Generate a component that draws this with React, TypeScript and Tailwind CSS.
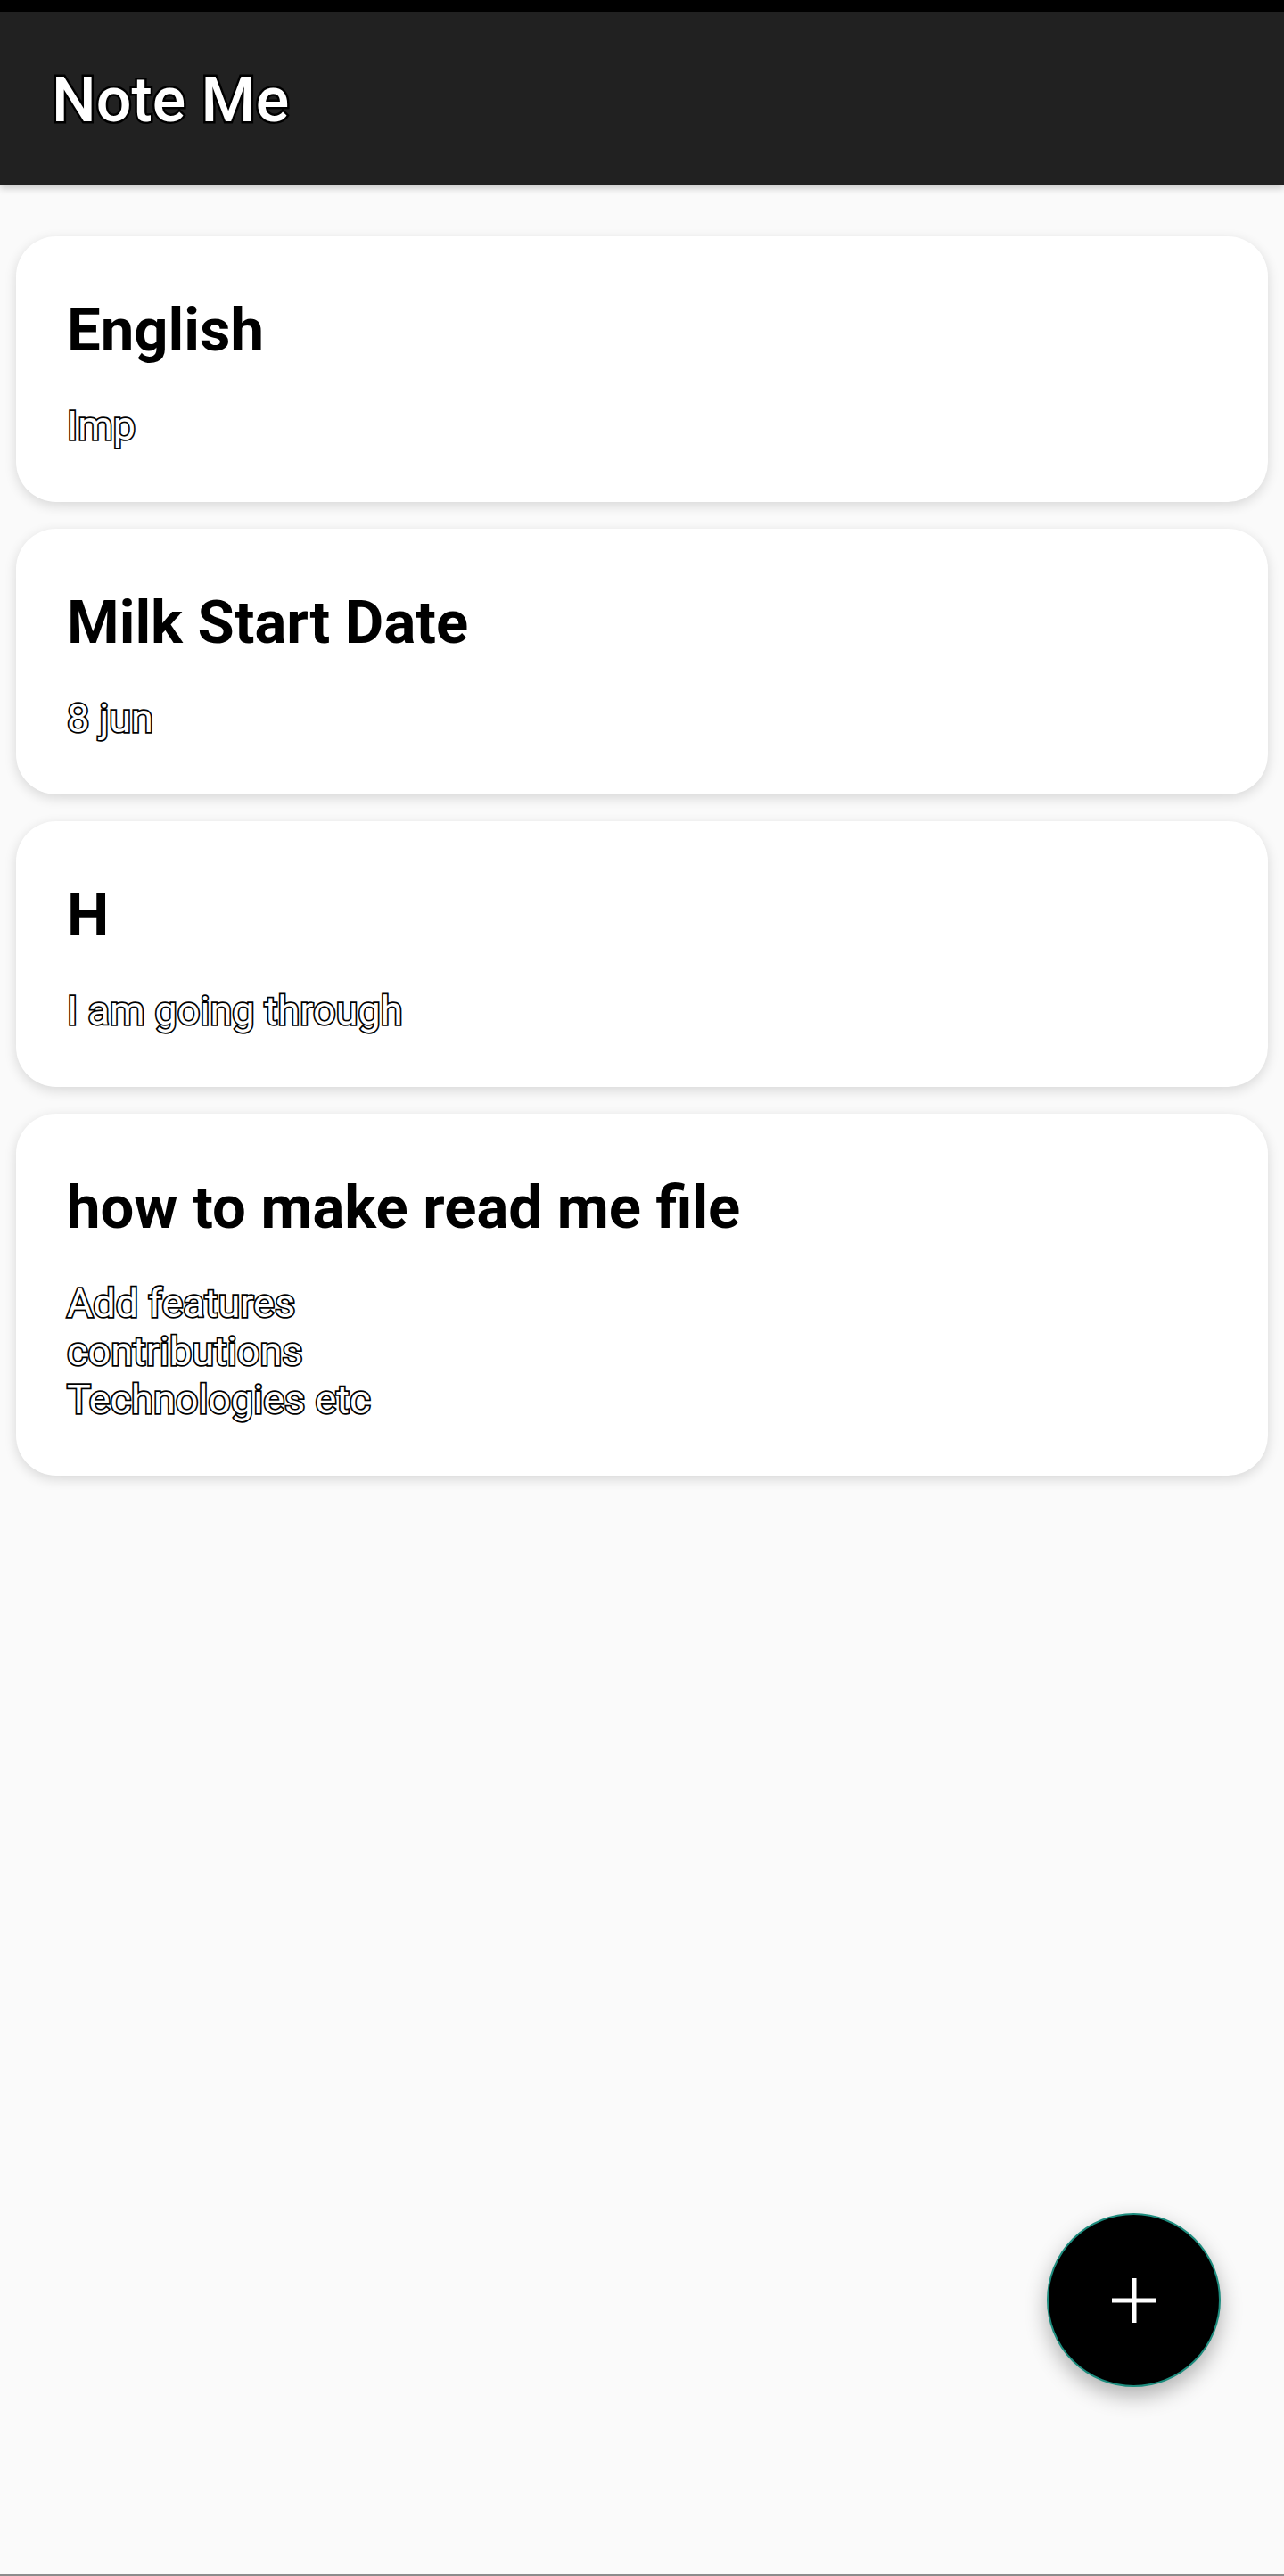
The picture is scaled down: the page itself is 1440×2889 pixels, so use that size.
import React from "react";

const notes = [
  { title: "English", body: ["Imp"] },
  { title: "Milk Start Date", body: ["8 jun"] },
  { title: "H", body: ["I am going through"] },
  { title: "how to make read me file", body: ["Add features", "contributions", "Technologies etc"] },
];

function NoteCard({ title, body }: { title: string; body: string[] }) {
  return (
    <div className="rounded-[45px] bg-white pl-[57px] pr-8 pt-[65px] pb-[58px] shadow-[0_4px_14px_rgba(0,0,0,0.14)]">
      <h2 className="text-[67px] leading-[80px] font-bold text-black">{title}</h2>
      <div className="mt-[41px]">
        {body.map((line) => (
          <p
            key={line}
            className="text-[45px] leading-[54px] text-white [-webkit-text-stroke:3.5px_black] [paint-order:stroke_fill]"
          >
            {line}
          </p>
        ))}
      </div>
    </div>
  );
}

export default function App() {
  return (
    <div className="relative flex min-h-[2889px] flex-col bg-[#fafafa] font-['Roboto',sans-serif]">
      <div className="h-[13px] bg-black" />
      <header className="z-10 flex h-[195px] items-center bg-[#212121] pl-[58px] pt-1 shadow-[0_3px_8px_rgba(0,0,0,0.2)]">
        <h1 className="text-[70px] font-medium text-white [-webkit-text-stroke:5px_black] [paint-order:stroke_fill]">
          Note Me
        </h1>
      </header>

      <main className="flex flex-col gap-[30px] px-[18px] pt-[57px]">
        {notes.map((n) => (
          <NoteCard key={n.title} title={n.title} body={n.body} />
        ))}
      </main>

      <div className="flex-1" />
      <div className="h-[2px] bg-[#8c8c8c]" />

      <button className="absolute top-[2482px] right-[71px] flex h-[195px] w-[195px] items-center justify-center rounded-full border-2 border-[#1d8c7e] bg-black shadow-[0_10px_24px_rgba(0,0,0,0.3)]">
        <svg width="50" height="50" viewBox="0 0 50 50">
          <rect x="22.5" y="0" width="5" height="50" fill="white" />
          <rect x="0" y="22.5" width="50" height="5" fill="white" />
        </svg>
      </button>
    </div>
  );
}
